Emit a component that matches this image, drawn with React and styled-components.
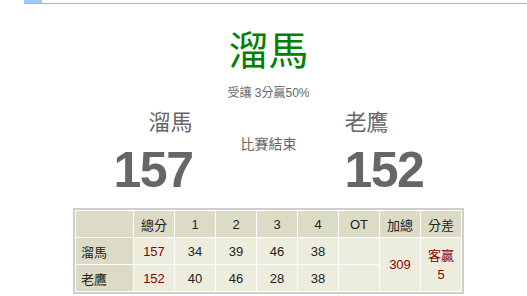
import styled, { createGlobalStyle } from "styled-components";

const GlobalStyle = createGlobalStyle`
  body {
    margin: 0;
    background: #fff;
    font-family: "Liberation Sans", "Noto Sans CJK TC", sans-serif;
  }
`;

const quarters = [
  { team: "溜馬", total: 157, q: [34, 39, 46, 38] },
  { team: "老鷹", total: 152, q: [40, 46, 28, 38] },
];

function App() {
  return (
    <>
      <GlobalStyle />
      <TopBar>
        <ActiveTab />
      </TopBar>
      <Main>
        <Title>溜馬</Title>
        <Subtitle>受讓 3分贏50%</Subtitle>
        <Scoreboard>
          <TeamBlock $align="right">
            <TeamName>溜馬</TeamName>
            <BigScore>157</BigScore>
          </TeamBlock>
          <Status>比賽結束</Status>
          <TeamBlock $align="left">
            <TeamName>老鷹</TeamName>
            <BigScore>152</BigScore>
          </TeamBlock>
        </Scoreboard>
        <BoxTable>
          <thead>
            <tr>
              <HeadCell $first />
              <HeadCell>總分</HeadCell>
              <HeadCell>1</HeadCell>
              <HeadCell>2</HeadCell>
              <HeadCell>3</HeadCell>
              <HeadCell>4</HeadCell>
              <HeadCell>OT</HeadCell>
              <HeadCell>加總</HeadCell>
              <HeadCell>分差</HeadCell>
            </tr>
          </thead>
          <tbody>
            {quarters.map((row, i) => (
              <tr key={row.team}>
                <TeamCell>{row.team}</TeamCell>
                <Cell $red>{row.total}</Cell>
                {row.q.map((v, j) => (
                  <Cell key={j}>{v}</Cell>
                ))}
                <Cell />
                {i === 0 && (
                  <>
                    <Cell rowSpan={2} $red>309</Cell>
                    <Cell rowSpan={2} $red>
                      客贏
                      <br />5
                    </Cell>
                  </>
                )}
              </tr>
            ))}
          </tbody>
        </BoxTable>
      </Main>
    </>
  );
}

const TopBar = styled.div`
  margin-left: 24px;
  height: 3px;
  border-bottom: 1px solid #8cb9ef;
`;

const ActiveTab = styled.div`
  width: 18px;
  height: 3px;
  background: #9ccaff;
`;

const Main = styled.div`
  padding-left: 10px;
  display: flex;
  flex-direction: column;
  align-items: center;
`;

const Title = styled.h1`
  margin: 23px 0 0;
  font-size: 40px;
  line-height: 48px;
  font-weight: normal;
  color: #008000;
`;

const Subtitle = styled.div`
  margin-top: 10px;
  font-size: 12px;
  line-height: 16px;
  color: #666;
`;

const Scoreboard = styled.div`
  align-self: stretch;
  display: grid;
  grid-template-columns: 1fr 152px 1fr;
  margin-top: 9px;
`;

const TeamBlock = styled.div`
  display: flex;
  flex-direction: column;
  align-items: ${({ $align }) => ($align === "right" ? "flex-end" : "flex-start")};
`;

const TeamName = styled.div`
  font-size: 22px;
  line-height: 26px;
  color: #666;
`;

const BigScore = styled.div`
  margin-top: 9px;
  font-size: 50px;
  line-height: 50px;
  font-weight: bold;
  letter-spacing: -1.5px;
  color: #666;
`;

const Status = styled.div`
  padding-top: 24px;
  text-align: center;
  font-size: 14px;
  line-height: 20px;
  color: #666;
`;

const BoxTable = styled.table`
  margin-top: 13px;
  width: 391px;
  border: 2px solid #cfcfcf;
  border-collapse: separate;
  border-spacing: 1px;
  font-size: 13px;
  color: #222;
  table-layout: fixed;
`;

const HeadCell = styled.th`
  width: ${({ $first }) => ($first ? "57px" : "auto")};
  height: 26px;
  padding: 0;
  background: #dcdcc6;
  font-weight: normal;
  text-align: center;
`;

const TeamCell = styled.td`
  height: 26px;
  padding: 0 0 0 5px;
  background: #dcdcc6;
  text-align: left;
`;

const Cell = styled.td`
  height: 26px;
  padding: 0;
  background: #ededde;
  text-align: center;
  line-height: 19px;
  color: ${({ $red }) => ($red ? "#8b0000" : "#222")};
`;

export default App;
